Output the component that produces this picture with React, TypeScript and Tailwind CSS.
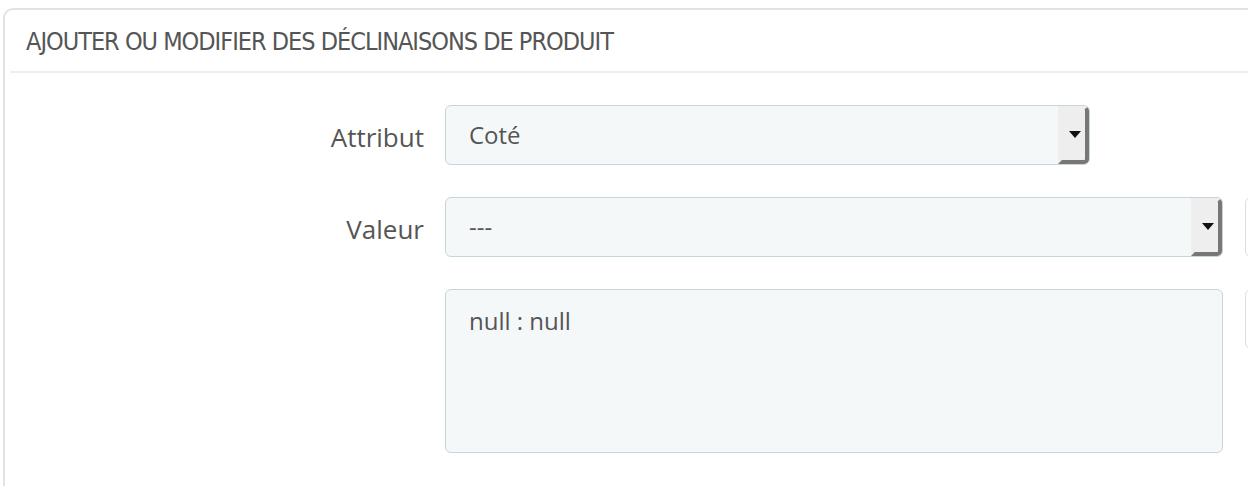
import React from "react";

function SelectBox({ value, width }: { value: string; width: string }) {
  return (
    <div
      className={`relative flex h-[60px] ${width} items-center rounded-[6px] border border-[#c7d6db] bg-[#f5f8f9]`}
    >
      <span className="pl-[23px] text-[24px] text-[#555555]">{value}</span>
      <div className="absolute right-0 top-0 bottom-0 flex w-[31px] items-center justify-center rounded-r-[5px] border-t-[3px] border-r-[4px] border-b-[4px] border-l-[4px] border-t-transparent border-l-transparent border-r-[#777777] border-b-[#777777] bg-[#eeeeee]">
        <svg width="12" height="7" viewBox="0 0 12 7" className="mr-[-2px]">
          <path d="M0 0 L12 0 L6 7 Z" fill="#111111" />
        </svg>
      </div>
    </div>
  );
}

export default function App() {
  return (
    <div
      className="h-[486px] w-[1248px] overflow-hidden bg-white"
      style={{ fontFamily: '"Open Sans", "Noto Sans", sans-serif' }}
    >
      <div className="ml-[3px] mt-[8px] h-[600px] w-[1400px] rounded-tl-[10px] border-l-2 border-t-2 border-[#e2e2e2] bg-white">
        <div className="ml-[5px] flex h-[63px] items-center border-b-2 border-[#eeeeee] pl-[16px] pt-[3px]">
          <h1
            className="text-[25px] uppercase tracking-[-1px] text-[#555555]"
            style={{ fontFamily: '"Ubuntu Condensed", "Liberation Sans Narrow", "DejaVu Sans Condensed", sans-serif', fontStretch: "condensed" }}
          >
            AJOUTER OU MODIFIER DES DÉCLINAISONS DE PRODUIT
          </h1>
        </div>

        <div className="flex flex-col gap-[32px] pt-[32px]">
          <div className="flex items-center">
            <label className="mt-[4px] w-[419px] text-right text-[26px] text-[#555555]">Attribut</label>
            <div className="ml-[21px]">
              <SelectBox value="Coté" width="w-[645px]" />
            </div>
          </div>

          <div className="flex items-center">
            <label className="mt-[4px] w-[419px] text-right text-[26px] text-[#555555]">Valeur</label>
            <div className="ml-[21px]">
              <SelectBox value="---" width="w-[778px]" />
            </div>
            <div className="ml-[22px] h-[60px] w-[60px] rounded-[6px] border border-[#dddddd] bg-white" />
          </div>

          <div className="flex items-start">
            <div className="w-[419px]" />
            <div className="ml-[21px] h-[164px] w-[778px] rounded-[6px] border border-[#c7d6db] bg-[#f5f8f9] pl-[23px] pt-[13px] text-[24px] text-[#555555]">
              null : null
            </div>
            <div className="ml-[22px] h-[60px] w-[60px] rounded-[6px] border border-[#dddddd] bg-white" />
          </div>
        </div>
      </div>
    </div>
  );
}
